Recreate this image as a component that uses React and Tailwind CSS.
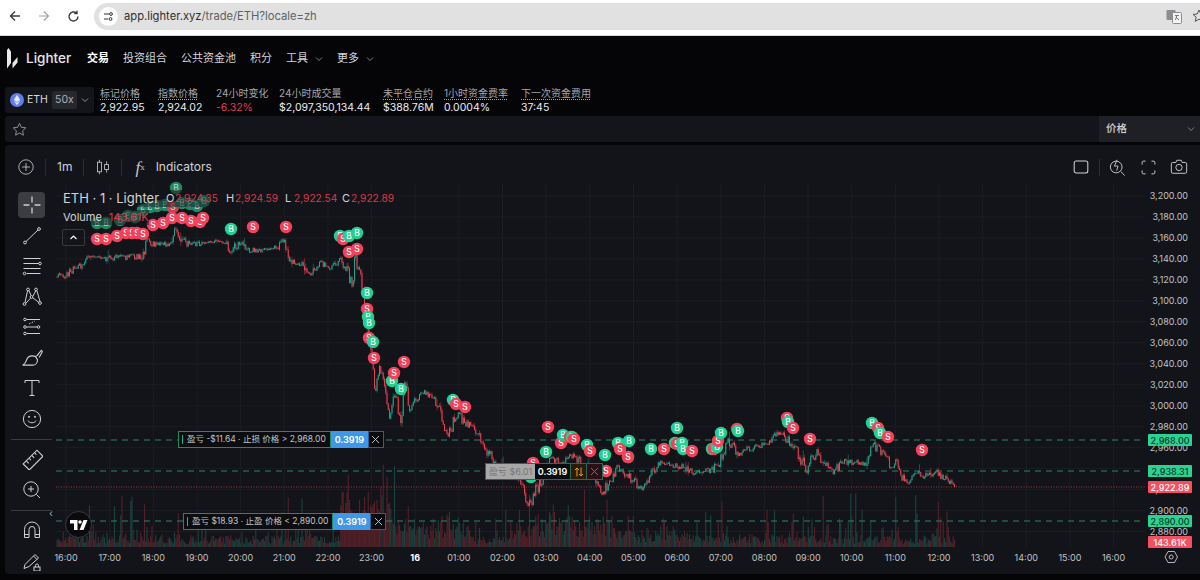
import React from "react";

const KEY = [[57,277],[65,275],[72,270],[80,266],[87,258],[100,259],[110,258],[125,257],[143,256],[147,242],[158,245],[170,243],[175,227],[181,236],[187,244],[200,243],[215,241],[227,243],[228,253],[240,243],[250,250],[265,249],[277,248],[282,241],[287,245],[290,260],[300,263],[310,273],[320,262],[333,267],[340,257],[347,270],[353,285],[355,255],[358,270],[362,283],[365,310],[370,340],[373,360],[375,390],[378,372],[382,367],[386,395],[390,417],[395,395],[401,420],[405,380],[410,410],[420,392],[433,395],[440,412],[447,436],[452,425],[458,413],[466,424],[473,425],[483,443],[490,455],[497,463],[510,470],[523,487],[528,507],[536,490],[543,477],[550,457],[560,463],[570,453],[587,467],[603,493],[610,480],[618,467],[633,480],[642,490],[650,480],[657,463],[677,465],[693,472],[713,470],[720,460],[728,440],[737,453],[760,445],[770,441],[780,432],[790,442],[797,452],[807,470],[817,450],[825,465],[833,472],[843,462],[867,463],[872,443],[887,457],[892,467],[897,460],[905,482],[920,472],[923,477],[937,472],[947,480],[955,487]];

function baseY(x) {
  for (let i = 1; i < KEY.length; i++) {
    if (x <= KEY[i][0]) {
      const [a, b] = KEY[i - 1];
      const [c, d] = KEY[i];
      return b + ((d - b) * (x - a)) / (c - a || 1);
    }
  }
  return 487;
}

let seed = 12345;
const rnd = () => {
  seed = (seed * 1664525 + 1013904223) % 4294967296;
  return seed / 4294967296;
};

const candles = { g: "", r: "", gb: "", rb: "", vg: "", vr: "" };
let prev = 277;
let dir = 1;
for (let x = 57; x <= 955; x += 1.25) {
  const b = baseY(x);
  const slope = Math.abs(baseY(x + 3) - baseY(x - 3));
  const amp = 2 + Math.min(slope * 0.25, 3);
  if (rnd() > 0.55) dir = -dir;
  const close = b + dir * rnd() * amp * 1.3;
  const spike = rnd() > 0.93 ? 3 + rnd() * 3 : 0;
  const top = Math.min(prev, close) - rnd() * amp * 0.7 - (rnd() > 0.5 ? spike : 0);
  const bot = Math.max(prev, close) + rnd() * amp * 0.7 + spike * 0.5;
  const up = close < prev;
  const wick = `M${x} ${top.toFixed(1)}V${bot.toFixed(1)}`;
  const body = `M${x} ${Math.min(prev, close).toFixed(1)}V${(Math.max(prev, close) + 0.6).toFixed(1)}`;
  if (up) { candles.g += wick; candles.gb += body; } else { candles.r += wick; candles.rb += body; }
  prev = close;
  let vh = 3 + rnd() * 8 + Math.pow(rnd(), 9) * 48;
  const drop = x > 340 && x < 395;
  if (drop) vh = 14 + rnd() * 30 + Math.pow(rnd(), 3) * 55;
  if (x > 395 && x < 470) vh = 7 + rnd() * 18 + Math.pow(rnd(), 6) * 30;
  if (x > 515 && x < 610) vh = 8 + rnd() * 18 + Math.pow(rnd(), 5) * 36;
  if (x > 610 && x < 700) vh = 4 + rnd() * 12 + Math.pow(rnd(), 5) * 24;
  if (x > 890 && rnd() > 0.98) vh = 42;
  const bar = `M${x} 547V${(547 - vh).toFixed(1)}`;
  if (up && !(drop && rnd() < 0.8)) candles.vg += bar; else candles.vr += bar;
}

const B = [[176,188,1],[97,223,1],[106,223,1],[120,220,1],[128,216,1],[135,217,1],[143,210,1],[150,207,1],[157,206,1],[165,205,1],[172,207,1],[182,203,1],[190,204,1],[197,206,1],[204,201,1],[231,229],[340,236],[349,236],[357,233],[367,293],[368,317],[369,323],[373,342],[392,381],[401,389],[453,400],[531,477],[546,452],[563,435],[572,437],[587,445],[605,455],[618,443],[629,441],[628,457],[651,449],[677,428],[675,443],[682,443],[683,449],[712,449],[717,447],[721,433],[738,431],[788,422],[872,423],[880,433]];
const S = [[173,207,1],[97,239],[106,239],[117,236],[126,233],[132,233],[137,233],[143,234],[153,225],[163,223],[172,218],[182,218],[191,221],[200,222],[203,218],[253,227],[286,227],[343,239],[349,252],[357,249],[367,309],[369,338],[374,358],[404,362],[394,373],[456,404],[465,407],[548,427],[533,463],[561,443],[570,437],[574,439],[590,451],[606,471],[620,449],[628,457],[664,449],[677,444],[692,451],[714,449],[718,441],[737,429],[787,418],[793,428],[810,439],[878,428],[888,437],[922,450]];

const marks = [
  ...B.map((m) => ({ x: m[0], y: m[1], dim: m[2], t: "B" })),
  ...S.map((m) => ({ x: m[0], y: m[1], dim: m[2], t: "S" })),
].sort((a, b) => (b.dim ? 1 : 0) - (a.dim ? 1 : 0) || a.x - b.x);

const markFill = (m) => {
  if (m.t === "B") return m.dim ? "fill-[#1d8a66]" : "fill-[#22d08f]";
  return m.dim ? "fill-[#c9404f]" : "fill-[#f5405a]";
};

const prices = Array.from({ length: 17 }, (_, i) => 3200 - i * 20);
const hours = ["16:00","17:00","18:00","19:00","20:00","21:00","22:00","23:00","16","01:00","02:00","03:00","04:00","05:00","06:00","07:00","08:00","09:00","10:00","11:00","12:00","13:00","14:00","15:00","16:00"];
const hx = (i) => 66 + i * 43.65;
const py = (p) => 196 + (3200 - p) * 1.0485;

function Chart() {
  return (
    <svg viewBox="55 184 1145 390" className="absolute inset-0 h-[390px] w-[1145px] overflow-visible">
      {hours.map((_, i) => <path key={i} d={`M${hx(i)} 184V547`} className="stroke-[#1c1d22]" />)}
      {prices.map((p) => <path key={p} d={`M56 ${py(p).toFixed(1)}H1145`} className="stroke-[#1c1d22]" />)}
      <path d={candles.vr} className="stroke-[#532029]" strokeWidth="1.1" />
      <path d={candles.vg} className="stroke-[#1b413e]" strokeWidth="1.1" />
      <path d="M56 440H1145M56 471H1145M56 521H1145" strokeDasharray="6 5" strokeWidth="1.2" className="stroke-[#24866a]" />
      <path d="M56 487H1145" strokeDasharray="1 1.5" className="stroke-[#a5303f]" />
      <path d={candles.r} className="stroke-[#b5303f]" strokeWidth="0.6" />
      <path d={candles.g} className="stroke-[#17806f]" strokeWidth="0.6" />
      <path d={candles.rb} className="stroke-[#ef3d50]" strokeWidth="1" />
      <path d={candles.gb} className="stroke-[#1ea58c]" strokeWidth="1" />
      {marks.map((m, i) => (
        <g key={i}>
          <circle cx={m.x} cy={m.y} r="6.2" className={markFill(m)} />
          <text x={m.x} y={m.y + 3} textAnchor="middle" className={`text-[8.5px] font-medium ${m.dim ? "fill-[#b8c8c0]" : "fill-white"}`}>{m.t}</text>
        </g>
      ))}
      {prices.map((p) => (
        <text key={p} x="1188" y={py(p) + 3.2} textAnchor="end" className="fill-[#c2c2c4] text-[9px]">
          {p.toLocaleString("en-US")}.00
        </text>
      ))}
      {hours.map((h, i) => (
        <text key={i} x={hx(i)} y="560.5" textAnchor="middle" className={h === "16" ? "fill-white text-[9px] font-bold" : "fill-[#c2c2c4] text-[9px]"}>{h}</text>
      ))}
      <path d="M1165 557l3-5.5h6.5l3 5.5-3 5.5H1168z" fill="none" className="stroke-[#b8b8ba]" />
      <circle cx="1171.2" cy="557" r="2" fill="none" className="stroke-[#b8b8ba]" />
    </svg>
  );
}

const Ico = ({ size = 20, children, className = "" }) => (
  <svg width={size} height={size} viewBox="0 0 20 20" fill="none" stroke="currentColor" strokeWidth="1" className={className}>{children}</svg>
);

const Chevron = ({ className = "text-[#8a8a8e]" }) => (
  <svg width="8" height="8" viewBox="0 0 8 8" fill="none" stroke="currentColor" strokeWidth="0.9" className={className}><path d="M1 2.5l3 3 3-3" /></svg>
);

const tools = [
  <Ico size={26} key="c"><path d="M3.5 10H8M12 10h4.5M10 3.5V8M10 12v4.5" /></Ico>,
  <Ico key="l"><circle cx="3" cy="16.5" r="1.4" /><circle cx="17" cy="3" r="1.4" /><path d="M4 15.5L16 4" /></Ico>,
  <Ico key="f"><path d="M1.5 2.5h17M1.5 7.5h15.5M1.5 12.5h17M4.5 17.5h14" /><circle cx="18" cy="7.5" r="1.3" /><circle cx="2.5" cy="17.5" r="1.3" /></Ico>,
  <Ico key="p"><circle cx="2.5" cy="17" r="1.4" /><circle cx="6" cy="2.5" r="1.4" /><circle cx="14" cy="2.5" r="1.4" /><circle cx="18" cy="16" r="1.4" /><circle cx="9.5" cy="10" r="1.4" /><path d="M3 15.5L5.5 4M7 3.5l2 5M11 9l3-5.5M15 4l3 10.5M3.8 16.3l4.7-5M11 11l6 4.5" /></Ico>,
  <Ico key="g"><circle cx="3" cy="2.5" r="1.3" /><path d="M4.5 2.5H18" /><circle cx="3" cy="10" r="1.3" /><circle cx="16.5" cy="10" r="1.3" /><path d="M4.5 10H15" /><circle cx="3" cy="16.5" r="1.3" /><path d="M4.5 16.5H18" /><path d="M7 7l6-3" strokeDasharray="1.5 1.5" /></Ico>,
  <Ico key="b" size={22}><path d="M13 8.5c-4-1-7 0-8 3.5-.5 2-1.5 3.5-3.5 4.5h9c3 0 4.5-2.5 4.5-5z" /><path d="M14 8.5l4.5-5.5 1 1-3 5.5" /></Ico>,
  <Ico key="t"><path d="M3 5V2.5h14V5M10 2.5v15M7.5 17.5h5" /></Ico>,
  <Ico key="s" size={20}><circle cx="10" cy="10" r="8.6" /><path d="M6 11.5c1 3 7 3 8 0" /><circle cx="7" cy="7.8" r="0.6" fill="currentColor" /><circle cx="13" cy="7.8" r="0.6" fill="currentColor" /></Ico>,
  null,
  <Ico key="r" size={22}><path d="M2 14.5L14.5 2 20 7.5 7.5 20z" /><path d="M5 12l2 2M7.5 9.5l1.5 1.5M10 7l2 2M12.5 4.5l1.5 1.5" /></Ico>,
  <Ico key="z"><circle cx="9" cy="9" r="7.2" /><path d="M9 6v6M6 9h6M14.5 14.5l3.5 3.5" /></Ico>,
  null,
  <Ico key="m"><path d="M2.5 17.5V9.5a7.5 7.5 0 0 1 15 0v8h-4.5v-8a3 3 0 0 0-6 0v8zM2.5 14.5H7M13 14.5h4.5" /></Ico>,
  <Ico key="k"><path d="M2 17.5l1-4L13 3.5l3.5 3.5L7 15.5zM11.5 5l3.5 3.5" /><rect x="12" y="16" width="6" height="4" /><path d="M13.5 16v-1.5a1.5 1.5 0 0 1 3 0V16" /></Ico>,
];

const OrderLabel = ({ className, text }) => (
  <div className={`absolute flex h-[17px] items-stretch text-[8.5px] leading-none ${className}`}>
    <div className="flex items-center gap-[4px] border border-[#1f8a66] bg-[#0c0d11] pl-[3px] pr-[4px] text-[#c4c4c6]">
      <span className="h-[9px] w-[1px] bg-[#25b585]" />
      <span className="whitespace-nowrap">{text}</span>
    </div>
    <div className="flex w-[37px] items-center justify-center bg-[#3f97ea] text-[9px] font-semibold text-white">0.3919</div>
    <div className="flex w-[16px] items-center justify-center border border-[#2c5f93] bg-[#0a0b0f] text-[#d0d0d0]">
      <svg width="9" height="9" viewBox="0 0 9 9" stroke="currentColor" strokeWidth="0.9"><path d="M1 1l7 7M8 1l-7 7" /></svg>
    </div>
  </div>
);

const Tag = ({ className, children }) => (
  <div className={`absolute left-[1093px] flex h-[12px] w-[44px] items-center justify-center rounded-[1px] text-[9px] font-medium leading-none ${className}`}>{children}</div>
);

const Stat = ({ label, value, className = "", dotted = true, valueClass = "text-[#ececee]" }) => (
  <div className={`flex flex-col gap-[1px] ${className}`}>
    <span className={`whitespace-nowrap text-[10px] leading-[13px] text-[#a5a5a9] ${dotted ? "underline decoration-dotted underline-offset-2" : ""}`}>{label}</span>
    <span className={`whitespace-nowrap text-[10.5px] leading-[13px] ${valueClass}`}>{value}</span>
  </div>
);

const Ohlc = ({ k, v, className = "mr-[6px]" }) => (
  <span className={`flex items-center ${className}`}>
    <span className="w-[9px] text-[11px]">{k}</span>
    <span className="w-[45px] text-[10.2px] text-[#d93a4c]">{v}</span>
  </span>
);

export default function App() {
  return (
    <div className="flex h-[580px] w-[1200px] flex-col overflow-hidden bg-[#050508] font-[Inter,'Noto_Sans_CJK_SC',sans-serif]">
      {/* browser chrome */}
      <div className="flex h-[36px] shrink-0 items-center border-b border-[#d8d8d8] bg-white pb-[3px] pl-[9px] text-[#3c3c3f]">
        <svg width="12" height="12" viewBox="0 0 12 12" fill="none" stroke="currentColor" strokeWidth="1.4"><path d="M11 6H1.5M6 1.5L1.5 6 6 10.5" /></svg>
        <svg width="12" height="12" viewBox="0 0 12 12" fill="none" stroke="#a2a2a6" strokeWidth="1.2" className="ml-[17px]"><path d="M1 6h9.5M6 1.5L10.5 6 6 10.5" /></svg>
        <svg width="13" height="13" viewBox="0 0 13 13" fill="none" stroke="currentColor" strokeWidth="1.4" className="ml-[17px]"><path d="M11 6.5a4.5 4.5 0 1 1-1.5-3.4M10 .8v2.7H7.3" /></svg>
        <div className="ml-[14px] flex h-[27px] flex-1 items-center rounded-l-[14px] bg-[#e1e1e1] pl-[5px]">
          <div className="flex h-[19px] w-[19px] items-center justify-center rounded-full bg-white">
            <svg width="11" height="11" viewBox="0 0 11 11" fill="none" stroke="#333" strokeWidth="1"><path d="M1 3h5M1 8h4" /><circle cx="8" cy="3" r="1.4" /><circle cx="7.5" cy="8" r="1.4" /></svg>
          </div>
          <span className="ml-[6px] text-[11.2px] text-[#2f2f31]">app.lighter.xyz<span className="text-[#5f6064]">/trade/ETH?locale=zh</span></span>
          <svg width="16" height="15" viewBox="0 0 16 15" className="ml-auto mr-[2px]"><rect x="0.5" y="1" width="9" height="10" rx="1" fill="#8b8c90" /><rect x="6.5" y="3.5" width="9" height="11" rx="1" fill="#f2f2f2" stroke="#8b8c90" /><path d="M9 6.5h4M11 6l-1.5 5M10 8l3 3" stroke="#77787c" fill="none" /></svg>
          <svg width="14" height="14" viewBox="0 0 14 14" fill="none" stroke="#55565a" className="ml-[8px] mr-[-6px]"><path d="M7 1l1.8 4 4.2.4-3.2 2.8 1 4.2L7 10.2 3.2 12.4l1-4.2L1 5.4 5.2 5z" /></svg>
        </div>
      </div>

      {/* nav */}
      <div className="flex h-[44px] shrink-0 items-center pl-[7px] pt-[1px] text-[11px] text-[#d4d4d8]">
        <svg width="11" height="21" viewBox="0 0 11 21" fill="#e8e8ea"><path d="M1.5 0L4 3.5V15L0 20.5V2z" /><path d="M10.5 9v5.5L5.5 20.5V15z" /></svg>
        <span className="ml-[8px] w-[61px] text-[13.5px] font-medium text-[#e6e6e8]">Lighter</span>
        <div className="flex items-center gap-[14px]">
          <span className="font-semibold text-white">交易</span>
          <span>投资组合</span>
          <span>公共资金池</span>
          <span>积分</span>
          <span className="flex items-center gap-[7px]">工具 <Chevron /></span>
          <span className="flex items-center gap-[7px]">更多 <Chevron /></span>
        </div>
      </div>

      {/* stats */}
      <div className="mt-[7px] flex h-[26px] shrink-0 items-center pl-[5px]">
        <div className="flex h-[26px] w-[89px] items-center rounded-[3px] bg-[#14151a] pl-[5px]">
          <svg width="14" height="14" viewBox="0 0 14 14"><circle cx="7" cy="7" r="7" fill="#627eea" /><path d="M7 1.8L3.8 7.1 7 9l3.2-1.9zM3.8 7.8L7 12.2l3.2-4.4L7 9.7z" fill="#fff" fillOpacity="0.85" /></svg>
          <span className="ml-[3px] text-[10.5px] text-[#d8d8da]">ETH</span>
          <span className="ml-[4px] flex h-[18px] w-[25px] items-center justify-center rounded-[3px] bg-[#27282e] text-[10.5px] text-[#b0b0b4]">50x</span>
          <Chevron className="ml-[4px] text-[#a0a0a4]" />
        </div>
        <div className="ml-[6px] flex gap-[13px]">
          <Stat label="标记价格" value="2,922.95" className="w-[45px]" />
          <Stat label="指数价格" value="2,924.02" className="w-[45px]" />
          <Stat label="24小时变化" value="-6.32%" dotted={false} className="w-[50px]" valueClass="text-[#e23b4e]" />
          <Stat label="24小时成交量" value="$2,097,350,134.44" dotted={false} className="w-[91px]" />
          <Stat label="未平仓合约" value="$388.76M" className="w-[48px]" />
          <Stat label="1小时资金费率" value="0.0004%" className="w-[64px]" />
          <Stat label="下一次资金费用" value="37:45" />
        </div>
      </div>

      {/* favourites */}
      <div className="ml-[5px] mt-[3px] flex h-[26px] shrink-0 items-center rounded-l-[3px] bg-[#14151a] pl-[7px]">
        <svg width="15" height="15" viewBox="0 0 15 15" fill="none" stroke="#8e8e92"><path d="M7.5 1.3l1.9 4 4.4.5-3.2 3 .8 4.4-3.9-2.2-3.9 2.2.8-4.4-3.2-3 4.4-.5z" /></svg>
        <div className="ml-auto flex h-full w-[101px] items-center justify-between bg-[#1f2025] pl-[7px] pr-[5px] text-[10.5px] font-medium text-[#d4d4d8]">
          价格 <Chevron />
        </div>
      </div>

      {/* chart panel */}
      <div className="ml-[5px] mt-[3px] flex h-[429px] shrink-0 flex-col overflow-hidden rounded-l-[4px] bg-[#131419]">
        <div className="flex h-[39px] shrink-0 items-center pl-[13px] pt-[5px] text-[#d2d2d4]">
          <Ico size={16}><circle cx="10" cy="10" r="9" /><path d="M10 5v10M5 10h10" /></Ico>
          <span className="ml-[11px] h-[17px] w-[1px] bg-[#2c2d33]" />
          <span className="ml-[11px] text-[12px]">1m</span>
          <span className="ml-[11px] h-[17px] w-[1px] bg-[#2c2d33]" />
          <Ico size={16} className="ml-[11px]"><rect x="3" y="4" width="5" height="12" /><path d="M5.5 1v3M5.5 16v3" /><rect x="12" y="7" width="5" height="6" /><path d="M14.5 3v4M14.5 13v4" /></Ico>
          <span className="ml-[10px] h-[17px] w-[1px] bg-[#2c2d33]" />
          <span className="ml-[13px] flex h-[17px] items-center font-['Liberation_Serif',serif] text-[17px] italic leading-none text-[#c8c8ca]">f<span className="text-[9px] not-italic">x</span></span>
          <span className="ml-[11px] flex h-[17px] items-center text-[12px] leading-none">Indicators</span>
          <div className="ml-auto mr-[12px] flex items-center">
            <Ico size={16}><rect x="1.5" y="2.5" width="17" height="15" rx="2.5" strokeWidth="1.3" /></Ico>
            <span className="ml-[10px] h-[17px] w-[1px] bg-[#2c2d33]" />
            <Ico size={18} className="ml-[9px]"><circle cx="8" cy="10" r="6.5" /><path d="M13 15l4.5 4.5M9 2L6 9h4l-1.5 5" /></Ico>
            <Ico size={15} className="ml-[14px]"><path d="M1.5 6V3.5a2 2 0 0 1 2-2H6M14 1.5h2.5a2 2 0 0 1 2 2V6M18.5 14v2.5a2 2 0 0 1-2 2H14M6 18.5H3.5a2 2 0 0 1-2-2V14" strokeWidth="1.3" /></Ico>
            <Ico size={18} className="ml-[14px]"><path d="M1.5 6.5A1.5 1.5 0 0 1 3 5h3.5l1-2.5h5l1 2.5H17a1.5 1.5 0 0 1 1.5 1.5v9A1.5 1.5 0 0 1 17 17H3a1.5 1.5 0 0 1-1.5-1.5z" /><circle cx="10" cy="10.5" r="3.5" /></Ico>
          </div>
        </div>

        <div className="flex h-[390px] flex-1">
          {/* drawing tools */}
          <div className="flex h-[390px] w-[50px] shrink-0 flex-col overflow-hidden pl-[3px] pt-[6px] text-[#d0d0d2]">
            {tools.map((t, i) =>
              t ? (
                <div key={i} className="flex h-[30.5px] shrink-0 items-center justify-center">
                  {i === 0 ? <div className="flex h-[26px] w-[27px] items-center justify-center rounded-[4px] bg-[#3c3d42]">{t}</div> : t}
                </div>
              ) : (
                <div key={i} className="flex h-[10px] shrink-0 items-center px-[3px]"><div className="h-[1px] w-full bg-[#3a3b40]" /></div>
              )
            )}
          </div>

          {/* chart */}
          <div className="relative h-[390px] w-[1145px] shrink-0 text-[#d4d4d6]">
            <Chart />

            {/* legend */}
            <div className="absolute left-[8px] top-[6px] flex h-[17px] items-center bg-[#131419]/50 pr-[2px] leading-none">
              <span className="w-[103px] text-[13px]">ETH · 1 · Lighter</span>
              <Ohlc k="O" v="2,924.35" className="mr-[6px]" />
              <Ohlc k="H" v="2,924.59" className="mr-[5px]" />
              <Ohlc k="L" v="2,922.54" className="mr-[3px]" />
              <Ohlc k="C" v="2,922.89" className="mr-0" />
            </div>
            <div className="absolute left-[8px] top-[26px] flex h-[15px] items-center gap-[7px] bg-[#131419]/50 text-[11px] leading-none">
              <span>Volume</span><span className="text-[#d93a4c]">143.61K</span>
            </div>
            <div className="absolute left-[7px] top-[45px] flex h-[17px] w-[23px] items-center justify-center rounded-[2px] border border-[#38393f] text-white">
              <svg width="9" height="9" viewBox="0 0 9 9" fill="none" stroke="currentColor" strokeWidth="1.1"><path d="M1.5 6L4.5 3l3 3" /></svg>
            </div>

            {/* order labels */}
            <OrderLabel className="left-[123px] top-[247px]" text="盈亏 -$11.64 · 止损 价格 > 2,968.00" />
            <OrderLabel className="left-[128px] top-[329px]" text="盈亏 $18.93 · 止盈 价格 < 2,890.00" />
            <div className="absolute left-[430px] top-[279px] flex h-[17px] items-stretch border border-[#1f6f55] text-[9px] leading-none">
              <div className="flex w-[49px] items-center justify-center bg-[#a8a8a8] text-[#767676]">盈亏 $6.01</div>
              <div className="flex w-[35px] items-center justify-center bg-[#0a0b0f] font-semibold text-white">0.3919</div>
              <div className="flex w-[16px] items-center justify-center border-l border-[#1f6f55] bg-[#2a1a08] text-[#f59a23]">
                <svg width="10" height="10" viewBox="0 0 10 10" fill="none" stroke="currentColor"><path d="M3 9.5V1M1 3l2-2 2 2M7 .5V9M5 7l2 2 2-2" /></svg>
              </div>
              <div className="flex w-[16px] items-center justify-center border-l border-[#1f6f55] bg-[#2c0f16] text-[#e8394e]">
                <svg width="9" height="9" viewBox="0 0 9 9" stroke="currentColor"><path d="M1 1l7 7M8 1l-7 7" /></svg>
              </div>
            </div>

            {/* price tags */}
            <Tag className="top-[250px] bg-[#2bd392] text-[#0c3a2b]">2,968.00</Tag>
            <Tag className="top-[281px] bg-[#2bd392] text-[#0c3a2b]">2,938.31</Tag>
            <Tag className="top-[297px] bg-[#f5505f] text-white">2,922.89</Tag>
            <Tag className="top-[331px] bg-[#2bd392] text-[#0c3a2b]">2,890.00</Tag>
            <Tag className="top-[352px] bg-[#f5505f] text-white">143.61K</Tag>

            {/* collapse handle + TradingView mark */}
            <span className="absolute left-[-6px] top-[324px] text-[10px] leading-none text-[#a8a8aa]">‹</span>
            <div className="absolute left-[10px] top-[327px] flex h-[27px] w-[27px] items-center justify-center rounded-full border border-[#3a3b40] bg-[#0a0a0d]">
              <svg width="18" height="10" viewBox="0 0 36 20" fill="#fff"><path d="M0 0h15v20H8V7H0z" /><circle cx="20" cy="4" r="3.5" /><path d="M27 0h8l-8 20h-8z" /></svg>
            </div>
          </div>
        </div>
      </div>
    </div>
  );
}
